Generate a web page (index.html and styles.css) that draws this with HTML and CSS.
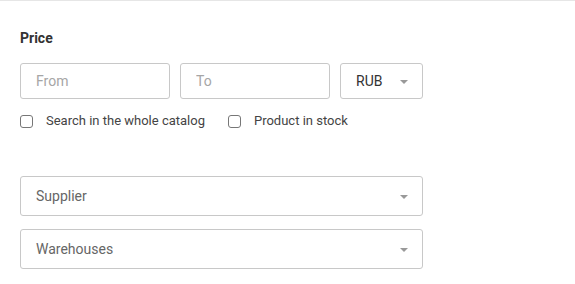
FILE: index.html
```html
<!DOCTYPE html>
<html lang="en">
<head>
    <meta charset="UTF-8">
    <meta name="viewport" content="width=device-width, initial-scale=1.0">
    <title>Filters</title>
    <link rel="stylesheet" href="styles.css">
</head>
<body>
    <div class="filters">
        <div class="title">Price</div>

        <div class="price-row">
            <input class="field" type="text" placeholder="From">
            <input class="field" type="text" placeholder="To">
            <div class="select small">
                <span class="value">RUB</span>
                <span class="arrow"></span>
            </div>
        </div>

        <div class="checks">
            <label class="check"><span class="box"></span>Search in the whole catalog</label>
            <label class="check"><span class="box"></span>Product in stock</label>
        </div>

        <div class="select wide">
            <span class="muted">Supplier</span>
            <span class="arrow"></span>
        </div>
        <div class="select wide">
            <span class="muted">Warehouses</span>
            <span class="arrow"></span>
        </div>
    </div>
</body>
</html>
```

FILE: styles.css
```css
body {
    margin: 0;
    padding: 0;
    font-family: Roboto, "Liberation Sans", Arial, sans-serif;
    font-size: 14px;
    color: #333;
    background: #fff;
}
.filters {
    border-top: 1px solid #e6e6e6;
    padding: 27px 20px 0 20px;
}
.title {
    font-weight: bold;
    line-height: 20px;
    color: #333;
}
.price-row {
    display: flex;
    gap: 10px;
    margin-top: 15px;
}
.field {
    width: 150px;
    height: 36px;
    box-sizing: border-box;
    border: 1px solid #c8c8c8;
    border-radius: 3px;
    padding: 0 15px;
    font-family: inherit;
    font-size: 14px;
    color: #333;
    outline: none;
}
.field::placeholder {
    color: #a6a6a6;
}
.select {
    box-sizing: border-box;
    border: 1px solid #c8c8c8;
    border-radius: 3px;
    display: flex;
    align-items: center;
    justify-content: space-between;
    padding: 0 14px 0 15px;
}
.select.small {
    width: 83px;
    height: 36px;
}
.select.wide {
    width: 403px;
    height: 40px;
    margin-bottom: 13px;
}
.value {
    color: #333;
}
.muted {
    color: #666;
}
.arrow {
    width: 0;
    height: 0;
    border-left: 4px solid transparent;
    border-right: 4px solid transparent;
    border-top: 4px solid #999;
    margin-top: 1px;
}
.checks {
    display: flex;
    gap: 23px;
    margin-top: 12px;
    margin-bottom: 45px;
    font-size: 13px;
    line-height: 20px;
    color: #444;
}
.check {
    display: flex;
    align-items: center;
}
.box {
    width: 13px;
    height: 13px;
    box-sizing: border-box;
    border: 1.5px solid #777;
    border-radius: 3px;
    margin-right: 13px;
}
```
